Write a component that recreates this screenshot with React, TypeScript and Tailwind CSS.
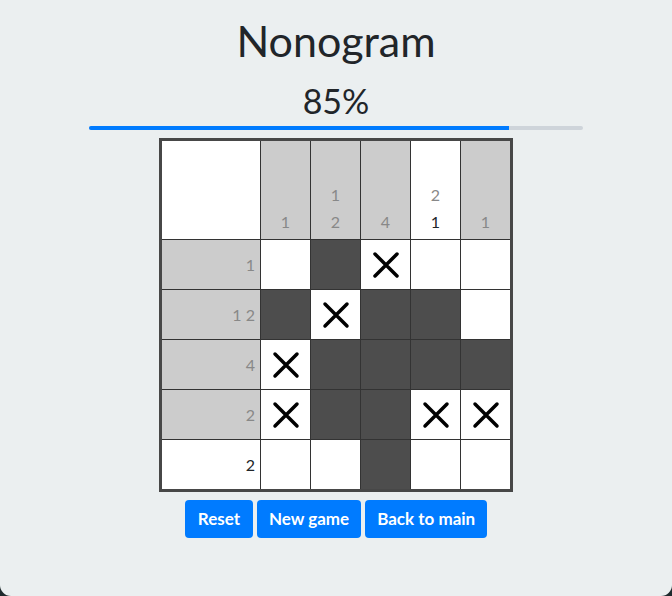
type Cell = 0 | 1 | 2; // 0 empty, 1 filled, 2 crossed

const board: Cell[][] = [
  [0, 1, 2, 0, 0],
  [1, 2, 1, 1, 0],
  [2, 1, 1, 1, 1],
  [2, 1, 1, 2, 2],
  [0, 0, 1, 0, 0],
];

const colClues: { nums: { n: number; done: boolean }[]; done: boolean }[] = [
  { nums: [{ n: 1, done: true }], done: true },
  { nums: [{ n: 1, done: true }, { n: 2, done: true }], done: true },
  { nums: [{ n: 4, done: true }], done: true },
  { nums: [{ n: 2, done: true }, { n: 1, done: false }], done: false },
  { nums: [{ n: 1, done: true }], done: true },
];

const rowClues: { text: string; done: boolean }[] = [
  { text: '1', done: true },
  { text: '1 2', done: true },
  { text: '4', done: true },
  { text: '2', done: true },
  { text: '2', done: false },
];

function Cross() {
  return (
    <svg width="28" height="28" viewBox="0 0 28 28">
      <path d="M3 3 L25 25 M25 3 L3 25" stroke="#000" strokeWidth="3.5" strokeLinecap="round" />
    </svg>
  );
}

function Board() {
  return (
    <div className="border-[3px] border-[#474747] bg-[#333]">
      <div className="grid grid-cols-[98px_repeat(5,49px)] grid-rows-[98px_repeat(5,49px)] gap-px">
        <div className="bg-white" />
        {colClues.map((c, i) => (
          <div
            key={i}
            className={`flex flex-col items-center justify-end pb-[4px] text-[16px] leading-[27px] ${c.done ? 'bg-[#cccccc]' : 'bg-white'}`}
          >
            {c.nums.map((x, j) => (
              <span key={j} className={x.done ? 'text-[#888]' : 'text-[#212529]'}>
                {x.n}
              </span>
            ))}
          </div>
        ))}
        {board.map((row, r) => (
          <Row key={r} r={r} row={row} />
        ))}
      </div>
    </div>
  );
}

function Row({ r, row }: { r: number; row: Cell[] }) {
  const clue = rowClues[r];
  return (
    <>
      <div
        className={`flex items-center justify-end pr-[5px] text-[16px] ${clue.done ? 'bg-[#cccccc] text-[#888]' : 'bg-white text-[#212529]'}`}
      >
        {clue.text}
      </div>
      {row.map((c, i) => (
        <div key={i} className={`flex items-center justify-center ${c === 1 ? 'bg-[#4d4d4d]' : 'bg-white'}`}>
          {c === 2 && <Cross />}
        </div>
      ))}
    </>
  );
}

export default function App() {
  const progress = 85;
  return (
    <div className="h-[596px] w-[672px] bg-[#1f2a2d] font-['Lato',sans-serif]">
      <div className="flex h-[596px] flex-col items-center rounded-b-[11px] bg-[#ebeff0] text-[#212529]">
        <h1 className="mt-[12px] text-[43px] font-normal leading-[58px]">Nonogram</h1>
        <div className="mt-[9px] text-[34px] leading-[44px]">{progress}%</div>
        <div className="mt-[3px] h-[4px] w-[494px] overflow-hidden rounded-full bg-[#ced4da]">
          <div className="h-full bg-[#007bff]" style={{ width: `${progress}%` }} />
        </div>
        <div className="mt-[8px]">
          <Board />
        </div>
        <div className="mt-[8px] flex gap-[4px]">
          <button className="h-[38px] rounded-[4px] bg-[#007bff] px-[13px] text-[17px] font-bold text-white">Reset</button>
          <button className="h-[38px] rounded-[4px] bg-[#007bff] px-[12px] text-[17px] font-bold text-white">New game</button>
          <button className="h-[38px] rounded-[4px] bg-[#007bff] px-[12px] text-[17px] font-bold text-white">Back to main</button>
        </div>
      </div>
    </div>
  );
}
